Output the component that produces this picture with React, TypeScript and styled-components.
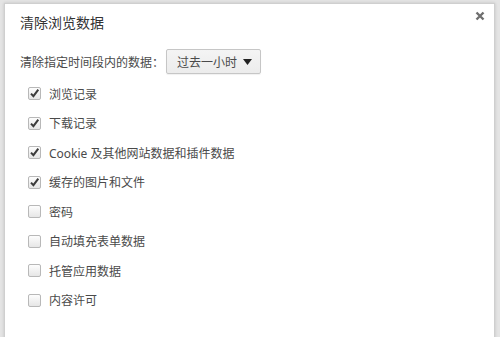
import React from "react";
import styled, { createGlobalStyle } from "styled-components";

const Global = createGlobalStyle`
  html, body { margin: 0; padding: 0; }
  body {
    background: #e4e4e4;
    font-family: "Noto Sans", "Noto Sans CJK SC", sans-serif;
    width: 500px;
    height: 337px;
    overflow: hidden;
  }
`;

const Dialog = styled.div`
  position: relative;
  margin: 3px 5px 0 4px;
  height: 340px;
  background: #fff;
  border: 1px solid #cfcfcf;
  box-shadow: 0 0 3px rgba(0, 0, 0, 0.15);
  box-sizing: border-box;
  padding: 8px 16px 0 15px;
  display: flex;
  flex-direction: column;
`;

const Title = styled.h1`
  margin: 0;
  font-size: 14px;
  line-height: 20px;
  font-weight: normal;
  color: #333;
  font-family: "Noto Sans CJK SC", sans-serif;
`;

const Close = styled.button`
  position: absolute;
  top: 5px;
  right: 7px;
  width: 14px;
  height: 14px;
  padding: 0;
  border: none;
  background: transparent;
  display: flex;
  align-items: center;
  justify-content: center;
`;

const RangeRow = styled.div`
  margin-top: 17px;
  display: flex;
  align-items: center;
  gap: 2px;
`;

const Label = styled.span`
  font-size: 12px;
  color: #4a4a4a;
  font-family: "Noto Sans CJK SC", sans-serif;
`;

const Select = styled.div`
  box-sizing: border-box;
  width: 95px;
  height: 25px;
  border: 1px solid #c6c6c6;
  border-radius: 2px;
  background: linear-gradient(#f4f4f4, #ececec);
  box-shadow: 0 1px 1px rgba(0, 0, 0, 0.06);
  display: flex;
  align-items: center;
  justify-content: space-between;
  padding: 0 8px 0 10px;
  font-size: 12px;
  color: #4a4a4a;
  font-family: "Noto Sans CJK SC", sans-serif;
`;

const List = styled.ul`
  list-style: none;
  margin: 5px 0 0 0;
  padding: 0 0 0 8px;
`;

const Item = styled.li`
  height: 29.5px;
  display: flex;
  align-items: center;
  gap: 8px;
  font-size: 12px;
  color: #4a4a4a;
  font-family: "Noto Sans", "Noto Sans CJK SC", sans-serif;
`;

const Box = styled.span`
  box-sizing: border-box;
  width: 13px;
  height: 13px;
  border: 1px solid #b8b8b8;
  border-radius: 2px;
  background: linear-gradient(#fdfdfd, #e6e6e6);
  display: flex;
  align-items: center;
  justify-content: center;
  flex-shrink: 0;
`;

const items: [string, boolean][] = [
  ["浏览记录", true],
  ["下载记录", true],
  ["Cookie 及其他网站数据和插件数据", true],
  ["缓存的图片和文件", true],
  ["密码", false],
  ["自动填充表单数据", false],
  ["托管应用数据", false],
  ["内容许可", false],
];

export default function App() {
  return (
    <>
      <Global />
      <Dialog>
        <Title>清除浏览数据</Title>
        <Close aria-label="close">
          <svg width="10" height="10" viewBox="0 0 10 10">
            <path d="M1.5 1.5L8.5 8.5M8.5 1.5L1.5 8.5" stroke="#6f6f6f" strokeWidth="2.4" />
          </svg>
        </Close>
        <RangeRow>
          <Label>清除指定时间段内的数据：</Label>
          <Select>
            <span>过去一小时</span>
            <svg width="9" height="6" viewBox="0 0 9 6">
              <path d="M0 0H9L4.5 6Z" fill="#222" />
            </svg>
          </Select>
        </RangeRow>
        <List>
          {items.map(([label, checked]) => (
            <Item key={label}>
              <Box>
                {checked && (
                  <svg width="11" height="11" viewBox="0 0 11 11">
                    <path
                      d="M2 5.6L4.4 8.2L9.3 1.6"
                      fill="none"
                      stroke="#3c3c3c"
                      strokeWidth="2"
                    />
                  </svg>
                )}
              </Box>
              <span>{label}</span>
            </Item>
          ))}
        </List>
      </Dialog>
    </>
  );
}
